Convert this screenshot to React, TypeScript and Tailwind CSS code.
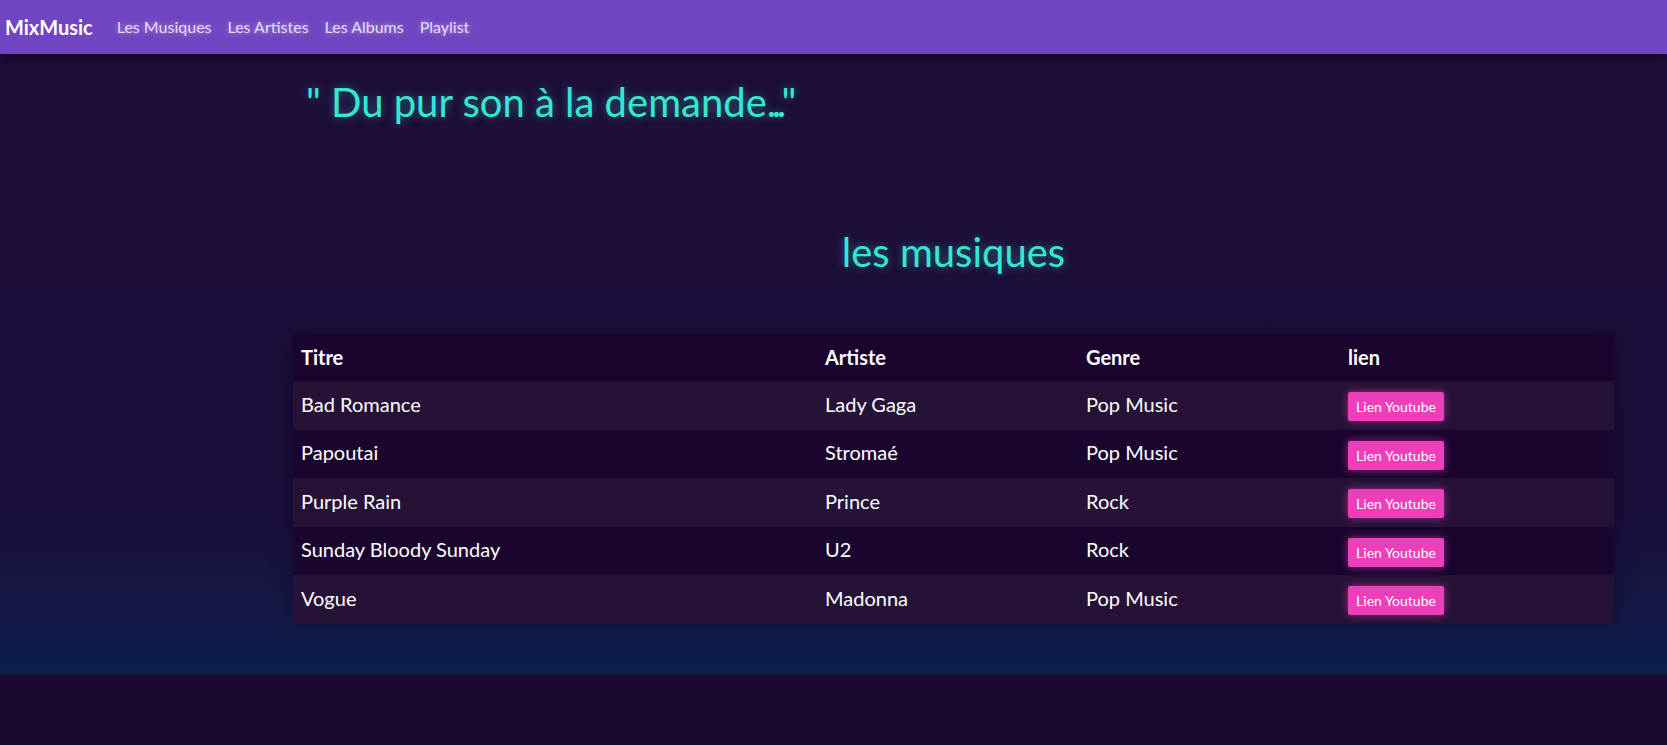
import React from "react";

const musiques = [
  { titre: "Bad Romance", artiste: "Lady Gaga", genre: "Pop Music" },
  { titre: "Papoutai", artiste: "Stromaé", genre: "Pop Music" },
  { titre: "Purple Rain", artiste: "Prince", genre: "Rock" },
  { titre: "Sunday Bloody Sunday", artiste: "U2", genre: "Rock" },
  { titre: "Vogue", artiste: "Madonna", genre: "Pop Music" },
];

const App = () => {
  return (
    <div className="min-h-[745px] bg-[#1a0a30] font-[Lato,sans-serif]">
      <nav className="flex items-center h-[54px] bg-[#7045c2] px-[5px] shadow-[0_4px_10px_rgba(10,0,25,0.6)] relative z-10">
        <h1 className="text-[20px] font-bold text-white mr-[16px] leading-none">MixMusic</h1>
        <ul className="flex items-center text-[16px] text-[#e8defa] [text-shadow:0_0_6px_rgba(255,255,255,0.45)]">
          <li className="px-2">Les Musiques</li>
          <li className="px-2">Les Artistes</li>
          <li className="px-2">Les Albums</li>
          <li className="px-2">Playlist</li>
        </ul>
      </nav>

      <main className="bg-gradient-to-b from-[#1e0d39] via-[#1a0e3b] via-75% to-[#0b1f4d] pl-[293px] pr-[53px] pt-[24px] pb-[50px]">
        <p className="ml-[13px] text-[40px] leading-[48px] text-[#33e8d2] [text-shadow:0_0_10px_rgba(51,232,210,0.45)]">
          " Du pur son à la demande<span className="tracking-[-4.5px]">...</span>"
        </p>

        <h2 className="mt-[102px] text-center text-[40px] leading-[48px] text-[#33e8d2] [text-shadow:0_0_10px_rgba(51,232,210,0.45)]">
          les musiques
        </h2>

        <table className="mt-[58px] w-full table-fixed border-collapse text-[20px] text-white shadow-[0_0_20px_rgba(10,0,30,0.4)]">
          <colgroup>
            <col className="w-[524px]" />
            <col className="w-[261px]" />
            <col className="w-[262px]" />
            <col />
          </colgroup>
          <thead>
            <tr className="h-[47px] bg-[#1a042e] text-left font-bold">
              <th className="px-2 pb-[2px]">Titre</th>
              <th className="px-2 pb-[2px]">Artiste</th>
              <th className="px-2 pb-[2px]">Genre</th>
              <th className="px-2 pb-[2px]">lien</th>
            </tr>
          </thead>
          <tbody>
            {musiques.map((m, i) => (
              <tr
                key={m.titre}
                className={i % 2 === 0 ? "h-[48.5px] bg-[#251236]" : "h-[48.5px] bg-[#1a052f]"}
              >
                <td className="px-2 pb-[3px]">{m.titre}</td>
                <td className="px-2 pb-[3px]">{m.artiste}</td>
                <td className="px-2 pb-[3px]">{m.genre}</td>
                <td className="px-2 align-middle">
                  <button className="h-[29px] w-[96px] rounded-[2px] bg-[#ed3fba] text-[14px] text-white shadow-[0_0_8px_rgba(237,63,186,0.6)]">
                    Lien Youtube
                  </button>
                </td>
              </tr>
            ))}
          </tbody>
        </table>
      </main>
    </div>
  );
};

export default App;
